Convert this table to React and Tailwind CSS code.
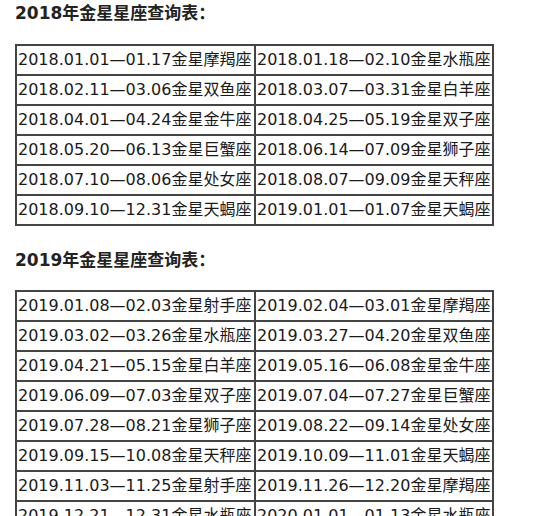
const TABLES = [
  {
    title: "2018年金星星座查询表：",
    rows: [
      ["2018.01.01—01.17金星摩羯座", "2018.01.18—02.10金星水瓶座"],
      ["2018.02.11—03.06金星双鱼座", "2018.03.07—03.31金星白羊座"],
      ["2018.04.01—04.24金星金牛座", "2018.04.25—05.19金星双子座"],
      ["2018.05.20—06.13金星巨蟹座", "2018.06.14—07.09金星狮子座"],
      ["2018.07.10—08.06金星处女座", "2018.08.07—09.09金星天秤座"],
      ["2018.09.10—12.31金星天蝎座", "2019.01.01—01.07金星天蝎座"],
    ],
  },
  {
    title: "2019年金星星座查询表：",
    rows: [
      ["2019.01.08—02.03金星射手座", "2019.02.04—03.01金星摩羯座"],
      ["2019.03.02—03.26金星水瓶座", "2019.03.27—04.20金星双鱼座"],
      ["2019.04.21—05.15金星白羊座", "2019.05.16—06.08金星金牛座"],
      ["2019.06.09—07.03金星双子座", "2019.07.04—07.27金星巨蟹座"],
      ["2019.07.28—08.21金星狮子座", "2019.08.22—09.14金星处女座"],
      ["2019.09.15—10.08金星天秤座", "2019.10.09—11.01金星天蝎座"],
      ["2019.11.03—11.25金星射手座", "2019.11.26—12.20金星摩羯座"],
      ["2019.12.21—12.31金星水瓶座", "2020.01.01—01.13金星水瓶座"],
    ],
  },
];

function VenusTable({ title, rows, first }) {
  return (
    <section>
      <h2
        className={
          "h-[26px] leading-[26px] text-[17px] font-bold text-[#222] " +
          (first ? "" : "mt-[21px]")
        }
      >
        {title}
      </h2>
      <table
        className={
          "w-[477px] border-collapse table-fixed " +
          (first ? "mt-[18px]" : "mt-[17px]")
        }
      >
        <colgroup>
          <col className="w-[239px]" />
          <col className="w-[238px]" />
        </colgroup>
        <tbody>
          {rows.map((row, i) => (
            <tr key={i}>
              {row.map((cell, j) => (
                <td
                  key={j}
                  className="h-[30px] border-2 border-[#444] px-[1px] py-0 text-[16px] leading-[26px] text-[#1a1a1a] whitespace-nowrap overflow-hidden"
                >
                  {cell}
                </td>
              ))}
            </tr>
          ))}
        </tbody>
      </table>
    </section>
  );
}

export default function App() {
  return (
    <div
      className="w-[539px] h-[516px] overflow-hidden bg-white pl-[15px]"
      style={{ fontFamily: '"DejaVu Sans", "Noto Sans CJK SC", sans-serif' }}
    >
      {TABLES.map((t, i) => (
        <VenusTable key={t.title} title={t.title} rows={t.rows} first={i === 0} />
      ))}
    </div>
  );
}
